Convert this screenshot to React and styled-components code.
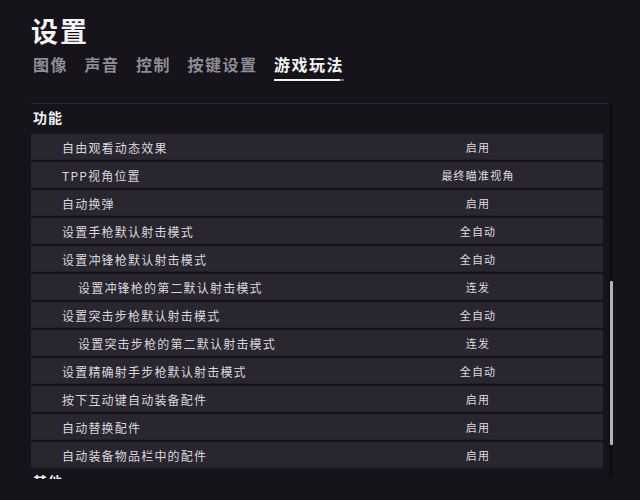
import React from "react";
import styled, { createGlobalStyle } from "styled-components";

const GlobalStyle = createGlobalStyle`
  html, body {
    margin: 0;
    padding: 0;
    background: #16131b;
  }
  body {
    font-family: "Noto Sans CJK SC", "Noto Sans", sans-serif;
    color: #e8e6ec;
  }
`;

const Page = styled.div`
  width: 640px;
  height: 500px;
  overflow: hidden;
  background: #16131b;
  padding: 13px 0 0 31px;
  box-sizing: border-box;
`;

const Title = styled.h1`
  margin: 0;
  font-size: 27px;
  font-weight: 700;
  letter-spacing: 2px;
  line-height: 36px;
  color: #f4f3f6;
`;

const Tabs = styled.div`
  display: flex;
  gap: 16.5px;
  margin-top: 2px;
  padding-left: 2px;
`;

const Tab = styled.div`
  position: relative;
  font-size: 16px;
  font-weight: 700;
  letter-spacing: 1.5px;
  line-height: 26px;
  padding-bottom: 4px;
  color: ${(p) => (p.$active ? "#f6f5f8" : "#8f8c96")};
  &::after {
    content: "";
    display: ${(p) => (p.$active ? "block" : "none")};
    position: absolute;
    left: 0;
    right: 0;
    bottom: 0;
    height: 2px;
    background: linear-gradient(90deg, #f2f2f4 94%, #77747c 94%);
  }
`;

const Body = styled.div`
  display: flex;
  margin-top: 22px;
  width: 582px;
  height: 376px;
`;

const Scroller = styled.div`
  flex: 1;
  overflow: hidden;
  border-top: 1px solid #2a2730;
`;

const SectionHead = styled.div`
  height: 30px;
  box-sizing: border-box;
  padding: 3px 0 0 2px;
  line-height: 20px;
  font-size: 14px;
  font-weight: 700;
  color: #f4f3f6;
  letter-spacing: 1px;
`;

const List = styled.div`
  display: flex;
  flex-direction: column;
  gap: 2px;
  margin-right: 5px;
`;

const Row = styled.div`
  display: flex;
  align-items: center;
  height: 26px;
  background: #29262f;
  box-shadow: inset 0 -1px 0 #222029;
  font-size: 12px;
  letter-spacing: 1.2px;
  color: #d9d7de;
`;

const Label = styled.div`
  flex: 1;
  padding-left: ${(p) => (p.$sub ? 47 : 31)}px;
`;

const Value = styled.div`
  width: 250px;
  text-align: center;
  font-size: 11px;
  color: #dcdae0;
`;

const Track = styled.div`
  position: relative;
  width: 4px;
  margin-left: 1px;
  background: #0f0d13;
  height: 374px;
`;

const Thumb = styled.div`
  position: absolute;
  left: 1px;
  top: 178px;
  width: 3px;
  height: 164px;
  border-radius: 1px;
  background: #b5b3ba;
`;

const rows = [
  ["自由观看动态效果", "启用"],
  ["TPP视角位置", "最终瞄准视角"],
  ["自动换弹", "启用"],
  ["设置手枪默认射击模式", "全自动"],
  ["设置冲锋枪默认射击模式", "全自动"],
  ["设置冲锋枪的第二默认射击模式", "连发", true],
  ["设置突击步枪默认射击模式", "全自动"],
  ["设置突击步枪的第二默认射击模式", "连发", true],
  ["设置精确射手步枪默认射击模式", "全自动"],
  ["按下互动键自动装备配件", "启用"],
  ["自动替换配件", "启用"],
  ["自动装备物品栏中的配件", "启用"],
];

const tabs = ["图像", "声音", "控制", "按键设置", "游戏玩法"];

export default function App() {
  return (
    <>
      <GlobalStyle />
      <Page>
        <Title>设置</Title>
        <Tabs>
          {tabs.map((t) => (
            <Tab key={t} $active={t === "游戏玩法"}>
              {t}
            </Tab>
          ))}
        </Tabs>
        <Body>
          <Scroller>
            <SectionHead>功能</SectionHead>
            <List>
              {rows.map(([label, value, sub]) => (
                <Row key={label}>
                  <Label $sub={sub}>{label}</Label>
                  <Value>{value}</Value>
                </Row>
              ))}
            </List>
            <SectionHead>其他</SectionHead>
          </Scroller>
          <Track>
            <Thumb />
          </Track>
        </Body>
      </Page>
    </>
  );
}
